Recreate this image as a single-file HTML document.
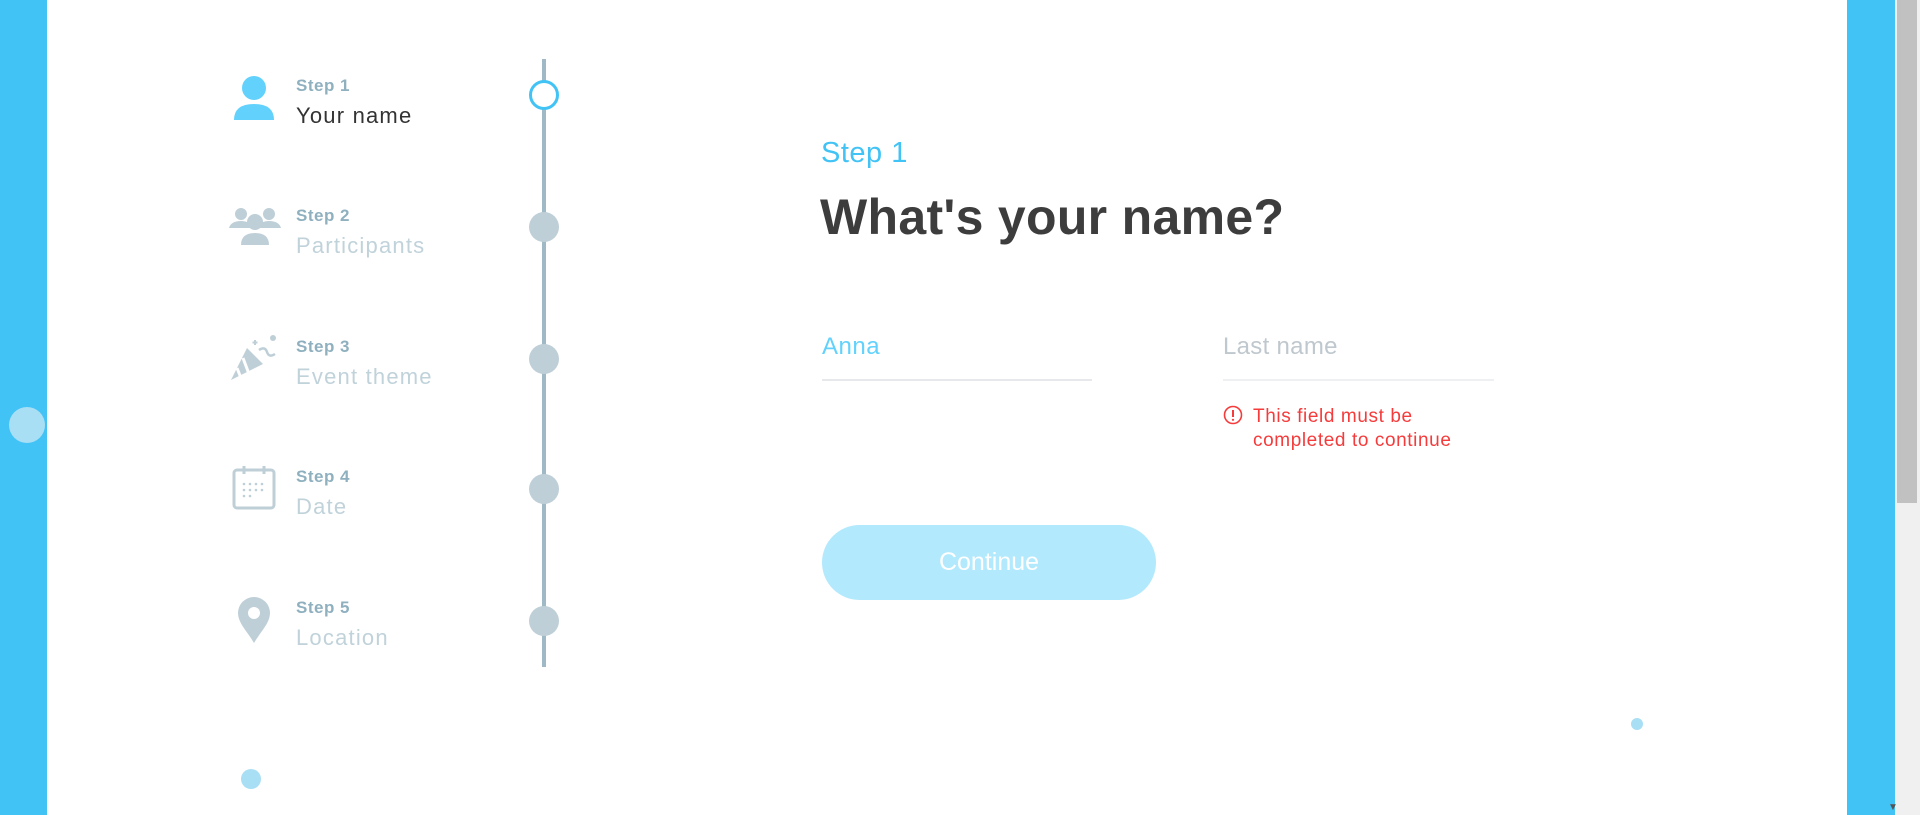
<!DOCTYPE html>
<html><head><meta charset="utf-8"><style>
*{margin:0;padding:0;box-sizing:border-box}
body{width:1920px;height:815px;overflow:hidden;background:#42c3f5;font-family:"Liberation Sans",sans-serif;position:relative}
.panel{position:absolute;left:47px;top:0;width:1800px;height:815px;background:#fff}
.sb{position:absolute;left:1895px;top:0;width:25px;height:815px;background:#f0f0f0}
.thumb{position:absolute;left:1897px;top:0;width:20px;height:503px;background:#c1c1c1}
.abs{position:absolute}
.line{left:542px;top:59px;width:4px;height:608px;background:#9fbac6}
.dot{width:30px;height:30px;border-radius:50%;background:#bfcfd7;left:529px}
.lbl{left:296px;font-size:17px;color:#8fb0bf;font-weight:bold;letter-spacing:0.5px}
.nm{left:296px;font-size:22px;color:#c0d2da;letter-spacing:1.2px}
</style></head><body>
<div class="panel"></div>
<div class="abs" style="left:9px;top:407px;width:36px;height:36px;border-radius:50%;background:#a9dff5"></div>
<div class="sb"></div><div class="thumb"></div>
<div class="abs" style="left:1888px;top:802px;font-size:10px;color:#555">▼</div>

<div class="abs line"></div>
<div class="abs" style="left:529px;top:80px;width:30px;height:30px;border-radius:50%;background:#fff;border:3px solid #42c3f5"></div>
<div class="abs dot" style="top:212px"></div>
<div class="abs dot" style="top:344px"></div>
<div class="abs dot" style="top:474px"></div>
<div class="abs dot" style="top:606px"></div>

<svg class="abs" style="left:232px;top:75px" width="44" height="46" viewBox="0 0 44 46"><circle cx="22" cy="13" r="12" fill="#62d2fd"/><path d="M2 45 Q2 29 22 29 Q42 29 42 45Z" fill="#62d2fd"/></svg>
<svg class="abs" style="left:229px;top:206px" width="52" height="42" viewBox="0 0 52 42"><circle cx="12" cy="8" r="6" fill="#bfcfd7"/><circle cx="40" cy="8" r="6" fill="#bfcfd7"/><path d="M0 22 Q2 15 12 15 Q20 15 22 20 L22 22Z M30 20 Q32 15 40 15 Q50 15 52 22 L30 22Z" fill="#bfcfd7"/><circle cx="26" cy="16" r="8" fill="#bfcfd7"/><path d="M12 39 Q12 27 26 27 Q40 27 40 39Z" fill="#bfcfd7"/></svg>
<svg class="abs" style="left:231px;top:334px" width="46" height="48" viewBox="0 0 46 48"><path d="M0 46 L16 14 L32 30 Z" fill="#bfcfd7"/><path d="M6 34 L10 44 M12 24 L18 40" stroke="#fff" stroke-width="3"/><circle cx="42" cy="4" r="3" fill="#bfcfd7"/><path d="M28 16 q6 -4 8 2 q2 6 8 2" stroke="#bfcfd7" stroke-width="2.5" fill="none"/><path d="M24 6 v5 M21.5 8.5 h5" stroke="#bfcfd7" stroke-width="2"/></svg>
<svg class="abs" style="left:232px;top:465px" width="44" height="46" viewBox="0 0 44 46"><rect x="2" y="5" width="40" height="38" rx="3" fill="none" stroke="#bfcfd7" stroke-width="3"/><path d="M12 1v8 M32 1v8 M17 5h10" stroke="#bfcfd7" stroke-width="3"/><g fill="#bfcfd7"><circle cx="12" cy="19" r="1.3"/><circle cx="18" cy="19" r="1.3"/><circle cx="24" cy="19" r="1.3"/><circle cx="30" cy="19" r="1.3"/><circle cx="12" cy="25" r="1.3"/><circle cx="18" cy="25" r="1.3"/><circle cx="24" cy="25" r="1.3"/><circle cx="30" cy="25" r="1.3"/><circle cx="12" cy="31" r="1.3"/><circle cx="18" cy="31" r="1.3"/></g></svg>
<svg class="abs" style="left:237px;top:597px" width="34" height="46" viewBox="0 0 34 46"><path d="M17 0 A16 16 0 0 1 33 16 C33 26 24 34 17 46 C10 34 1 26 1 16 A16 16 0 0 1 17 0Z" fill="#bfcfd7"/><circle cx="17" cy="16" r="6" fill="#fff"/></svg>

<div class="abs lbl" style="top:76px">Step 1</div><div class="abs nm" style="top:103px;color:#333">Your name</div>
<div class="abs lbl" style="top:206px">Step 2</div><div class="abs nm" style="top:233px">Participants</div>
<div class="abs lbl" style="top:337px">Step 3</div><div class="abs nm" style="top:364px">Event theme</div>
<div class="abs lbl" style="top:467px">Step 4</div><div class="abs nm" style="top:494px">Date</div>
<div class="abs lbl" style="top:598px">Step 5</div><div class="abs nm" style="top:625px">Location</div>

<div class="abs" style="left:821px;top:137px;font-size:29px;color:#42c3f5;letter-spacing:0.5px">Step 1</div>
<div class="abs" style="left:820px;top:188px;font-size:50px;font-weight:bold;color:#3d3d3d;letter-spacing:0.3px">What's your name?</div>
<div class="abs" style="left:822px;top:333px;font-size:24px;color:#62d2fd;letter-spacing:0.5px">Anna</div>
<div class="abs" style="left:822px;top:379px;width:270px;height:2px;background:#e6e8ec"></div>
<div class="abs" style="left:1223px;top:333px;font-size:24px;color:#bfc8ce;letter-spacing:0.3px">Last name</div>
<div class="abs" style="left:1223px;top:379px;width:271px;height:2px;background:#eef0f2"></div>
<svg class="abs" style="left:1223px;top:405px" width="20" height="20" viewBox="0 0 20 20"><circle cx="10" cy="10" r="8.5" fill="none" stroke="#f53b3b" stroke-width="1.6"/><path d="M10 5v7" stroke="#f53b3b" stroke-width="2"/><circle cx="10" cy="14.8" r="1.1" fill="#f53b3b"/></svg>
<div class="abs" style="left:1253px;top:405px;font-size:19px;line-height:24px;color:#f53b3b;letter-spacing:0.6px">This field must be<br>completed to continue</div>
<div class="abs" style="left:822px;top:525px;width:334px;height:75px;border-radius:38px;background:#b3e9fd;color:#fff;font-size:25px;text-align:center;line-height:75px">Continue</div>
<div class="abs" style="left:1631px;top:718px;width:12px;height:12px;border-radius:50%;background:#a9dff5"></div>
<div class="abs" style="left:241px;top:769px;width:20px;height:20px;border-radius:50%;background:#a9dff5"></div>
</body></html>
